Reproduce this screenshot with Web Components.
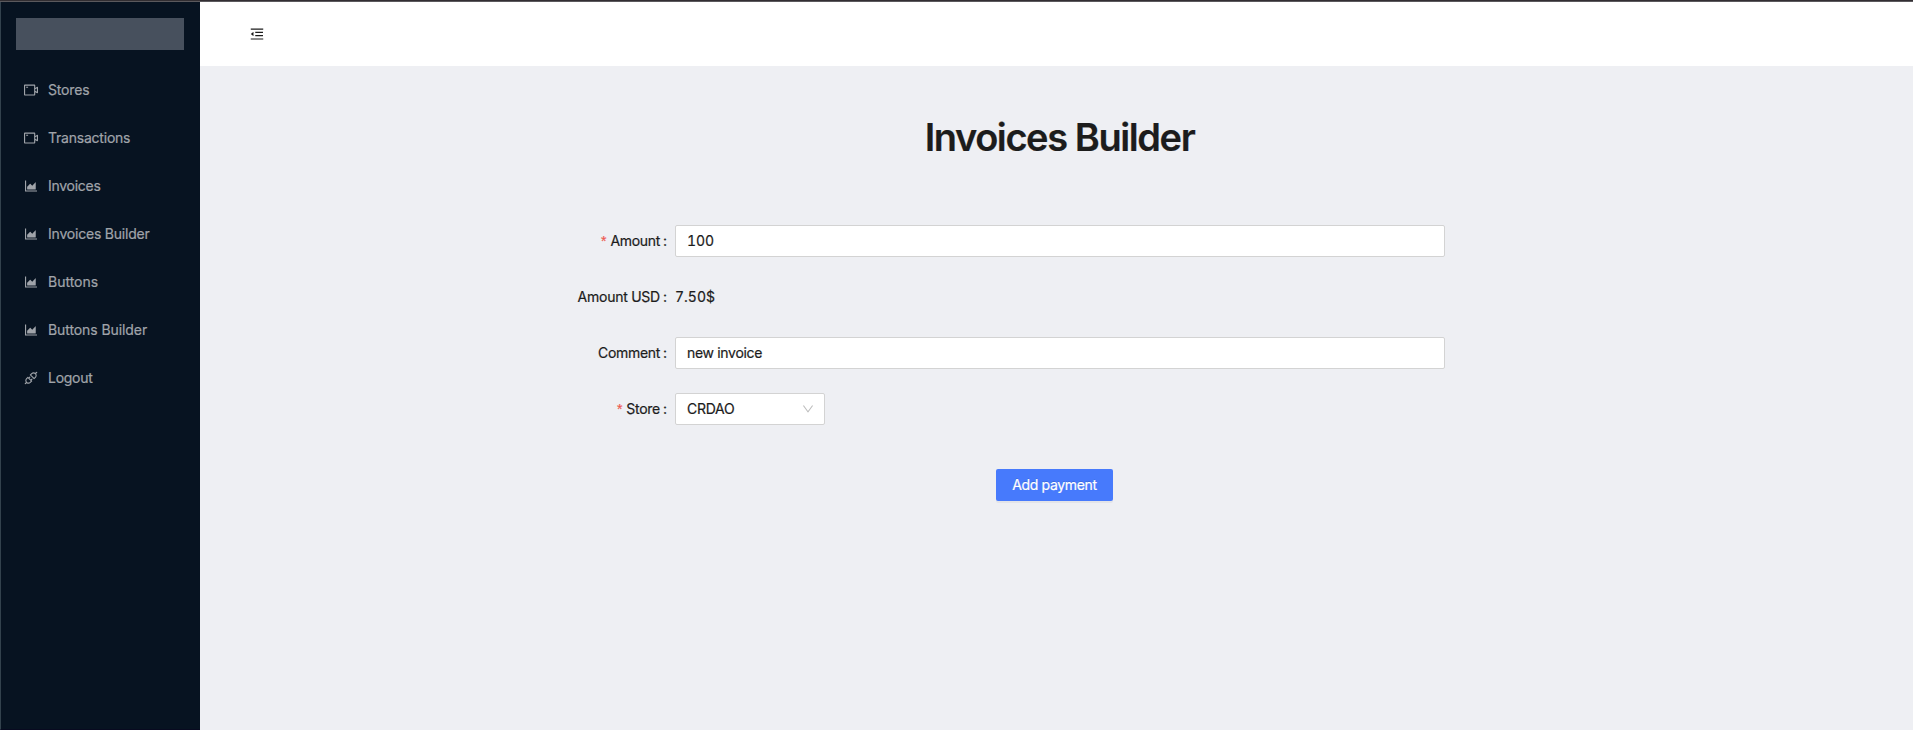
<!DOCTYPE html>
<html lang="en">
<head>
<meta charset="utf-8">
<title>Invoices Builder</title>
<style>
  html, body { margin: 0; height: 100%; }
  body { font: 14px/22px Inter, "Noto Sans", sans-serif; color: #1c1c1c; overflow: hidden; -webkit-text-stroke: .2px currentColor; }
</style>
</head>
<body>
<app-shell>
  <side-menu slot="side">
    <menu-item icon="video" style="letter-spacing:-.16px">Stores</menu-item>
    <menu-item icon="video" style="letter-spacing:-.22px">Transactions</menu-item>
    <menu-item icon="chart" style="letter-spacing:-.28px">Invoices</menu-item>
    <menu-item icon="chart" style="letter-spacing:-.21px">Invoices Builder</menu-item>
    <menu-item icon="chart" style="letter-spacing:0">Buttons</menu-item>
    <menu-item icon="chart" style="letter-spacing:-.08px">Buttons Builder</menu-item>
    <menu-item icon="api" style="letter-spacing:-.28px">Logout</menu-item>
  </side-menu>
  <top-bar slot="header"></top-bar>
  <page-title>Invoices Builder</page-title>
  <form-row label="Amount" required style="--label-ls:-.34px"><text-field style="letter-spacing:-.1px">100</text-field></form-row>
  <form-row label="Amount USD" style="--label-ls:-.25px"><span style="font-variant-numeric:tabular-nums">7.50$</span></form-row>
  <form-row label="Comment" style="--label-ls:-.32px"><text-field style="letter-spacing:-.29px">new invoice</text-field></form-row>
  <form-row label="Store" required style="--label-ls:-.28px"><select-field style="letter-spacing:-.26px">CRDAO</select-field></form-row>
  <action-button>Add payment</action-button>
</app-shell>
<script>
const ICONS = {
  fold: 'M408 442h480c4.4 0 8-3.6 8-8v-56c0-4.4-3.6-8-8-8H408c-4.4 0-8 3.6-8 8v56c0 4.4 3.6 8 8 8zm-8 204c0 4.4 3.6 8 8 8h480c4.4 0 8-3.6 8-8v-56c0-4.4-3.6-8-8-8H408c-4.4 0-8 3.6-8 8v56zm504-486H120c-4.4 0-8 3.6-8 8v56c0 4.4 3.6 8 8 8h784c4.4 0 8-3.6 8-8v-56c0-4.4-3.6-8-8-8zm0 632H120c-4.4 0-8 3.6-8 8v56c0 4.4 3.6 8 8 8h784c4.4 0 8-3.6 8-8v-56c0-4.4-3.6-8-8-8zM115.4 518.9L271.7 642c5.8 4.6 14.4.5 14.4-6.9V388.9c0-7.4-8.5-11.5-14.4-6.9L115.4 505.1a8.74 8.74 0 000 13.8z',
  chart: 'M888 792H200V168c0-4.4-3.6-8-8-8h-56c-4.4 0-8 3.6-8 8v688c0 4.4 3.6 8 8 8h752c4.4 0 8-3.6 8-8v-56c0-4.4-3.6-8-8-8zm-616-64h536c4.4 0 8-3.6 8-8V284c0-7.2-8.7-10.7-13.7-5.7L592 488.6l-125.4-124a8.03 8.03 0 00-11.3 0l-189 189.6a7.87 7.87 0 00-2.3 5.6V720c0 4.4 3.6 8 8 8z',
  video: 'M912 302.3L784 376V224c0-35.3-28.7-64-64-64H128c-35.3 0-64 28.7-64 64v576c0 35.3 28.7 64 64 64h592c35.3 0 64-28.7 64-64V648l128 73.7c21.3 12.3 48-3.1 48-27.6V330c0-24.6-26.7-40-48-27.7zM712 792H136V232h576v560zm176-167l-104-59.8V458.9L888 399v226zM208 360h112c4.4 0 8-3.6 8-8v-48c0-4.4-3.6-8-8-8H208c-4.4 0-8 3.6-8 8v48c0 4.4 3.6 8 8 8z',
  api: 'M917.7 148.8l-42.4-42.4c-1.6-1.6-3.6-2.3-5.7-2.3s-4.1.8-5.7 2.3l-76.1 76.1a199.27 199.27 0 00-112.1-34.3c-51.2 0-102.4 19.5-141.5 58.6L432.3 308.7a8.03 8.03 0 000 11.3L704 591.7c1.6 1.6 3.6 2.3 5.7 2.3 2 0 4.1-.8 5.7-2.3l101.9-101.9c68.9-69 77-175.7 24.3-253.5l76.1-76.1c3.1-3.2 3.1-8.3 0-11.4zM769.1 441.7l-59.4 59.4-186.8-186.8 59.4-59.4c24.9-24.9 58.1-38.7 93.4-38.7 35.3 0 68.4 13.7 93.4 38.7 24.9 24.9 38.7 58.1 38.7 93.4 0 35.3-13.8 68.4-38.7 93.4zm-190.2 105a8.03 8.03 0 00-11.3 0L501 613.3 410.7 523l66.7-66.7c3.1-3.1 3.1-8.2 0-11.3L441 408.6a8.03 8.03 0 00-11.3 0L363 475.3l-43-43a7.85 7.85 0 00-5.7-2.3c-2 0-4.1.8-5.7 2.3L206.8 534.2c-68.9 69-77 175.7-24.3 253.5l-76.1 76.1a8.03 8.03 0 000 11.3l42.4 42.4c1.6 1.6 3.6 2.3 5.7 2.3s4.1-.8 5.7-2.3l76.1-76.1c33.7 22.9 72.9 34.3 112.1 34.3 51.2 0 102.4-19.5 141.5-58.6l101.9-101.9c3.1-3.1 3.1-8.2 0-11.3l-43-43 66.7-66.7c3.1-3.1 3.1-8.2 0-11.3l-36.6-36.2zM441.7 769.1a131.32 131.32 0 01-93.4 38.7c-35.3 0-68.4-13.7-93.4-38.7a131.32 131.32 0 01-38.7-93.4c0-35.3 13.7-68.4 38.7-93.4l59.4-59.4 186.8 186.8-59.4 59.4z',
  down: 'M884 256h-75c-5.1 0-9.9 2.5-12.9 6.6L512 654.2 227.9 262.6c-3-4.1-7.8-6.6-12.9-6.6h-75c-6.5 0-10.3 7.4-6.5 12.7l352.6 486.1c12.8 17.6 39 17.6 51.7 0l352.6-486.1c3.9-5.3.1-12.7-6.4-12.7z'
};
const define = (name, render) => customElements.define(name, class extends HTMLElement {
  constructor() { super(); this.attachShadow({ mode: 'open' }); }
  connectedCallback() { this.shadowRoot.innerHTML = render(this); }
});
const attr = (el, n) => el.getAttribute(n) || '';

define('ui-icon', el => `<style>
  :host { display: block; flex: none; width: var(--size, 14px); height: var(--size, 14px); }
  svg { display: block; width: 100%; height: 100%; fill: currentColor; stroke: none; }
</style><svg viewBox="64 64 896 896"><path d="${ICONS[attr(el, 'name')]}"/></svg>`);

define('app-shell', () => `<style>
  :host { display: grid; grid-template-columns: 200px 1fr; grid-template-rows: 66px 1fr; box-sizing: border-box;
    height: 100vh; background: #eeeff3; }
  .side { grid-row: 1 / 3; }
  .side, .head { display: grid; border-top: 1px solid #322e32; }
  .edge { border-top: 1px solid #5b595d; display: grid; }
  main { display: flex; flex-direction: column; }
</style>
<div class="side"><div class="edge"><slot name="side"></slot></div></div>
<div class="head"><div class="edge"><slot name="header"></slot></div></div>
<main><slot></slot></main>`);

define('side-menu', () => `<style>
  :host { display: flex; flex-direction: column; background: #071321; border-left: 1px solid #33424d;
    border-bottom: 1px solid #080a20; color: #a0a4aa; }
  .logo { height: 32px; margin: 16px 16px 16px 15px; background: #47505d; }
  nav { display: flex; flex-direction: column; gap: 8px; padding-top: 4px; }
</style>
<div class="logo"></div><nav><slot></slot></nav>`);

define('menu-item', el => `<style>
  :host { display: flex; align-items: center; gap: 10px; height: 40px; padding: 0 16px 0 23px; white-space: nowrap; }
</style><ui-icon name="${attr(el, 'icon')}"></ui-icon><span><slot></slot></span>`);

define('top-bar', () => `<style>
  :host { display: flex; align-items: center; padding: 0 50px; background: #fff; }
</style><ui-icon name="fold"></ui-icon>`);

define('page-title', () => `<style>
  :host { display: block; }
  h1 { margin: 47px 0 64px; padding-left: 6px; font-size: 38px; line-height: 48px; font-weight: 600; letter-spacing: -1.42px; text-align: center; }
</style><h1><slot></slot></h1>`);

define('form-row', el => `<style>
  :host { display: grid; grid-template-columns: 475px 770px; align-items: center; height: 32px; margin-bottom: 24px; }
  .label { display: flex; justify-content: flex-end; }
  .text { letter-spacing: var(--label-ls, 0); }
  .star { margin-right: 4px; color: #ed5a51; font-family: "Liberation Sans", sans-serif; }
  .colon { margin: 0 8px 0 3px; }
</style>
<div class="label">${el.hasAttribute('required') ? '<span class="star">*</span>' : ''}<span class="text">${attr(el, 'label')}</span><span class="colon">:</span></div>
<div><slot></slot></div>`);

const FIELD = `box-sizing: border-box; height: 32px; padding: 0 10px 0 11px; background: #fff;
  border: 1px solid #d3d3d3; border-radius: 2px; font-variant-numeric: tabular-nums;`;
define('text-field', () => `<style>
  :host { display: flex; align-items: center; ${FIELD} }
</style><span><slot></slot></span>`);
define('select-field', () => `<style>
  :host { display: flex; align-items: center; justify-content: space-between; width: 150px; ${FIELD} }
  ui-icon { --size: 12px; color: #bdbdbd; }
</style><span><slot></slot></span><ui-icon name="down"></ui-icon>`);

define('action-button', () => `<style>
  :host { display: block; margin: 20px 0 0 796px; }
  button { display: block; box-sizing: border-box; width: 117px; height: 32px; padding: 0; border: 0; border-radius: 2px;
    background: #477afc; color: #fff; font: inherit; letter-spacing: -.33px; box-shadow: 0 2px 0 rgba(0,0,0,.043);
    text-shadow: 0 -1px 0 rgba(0,0,0,.12); }
</style><button type="button"><slot></slot></button>`);
</script>
</body>
</html>
